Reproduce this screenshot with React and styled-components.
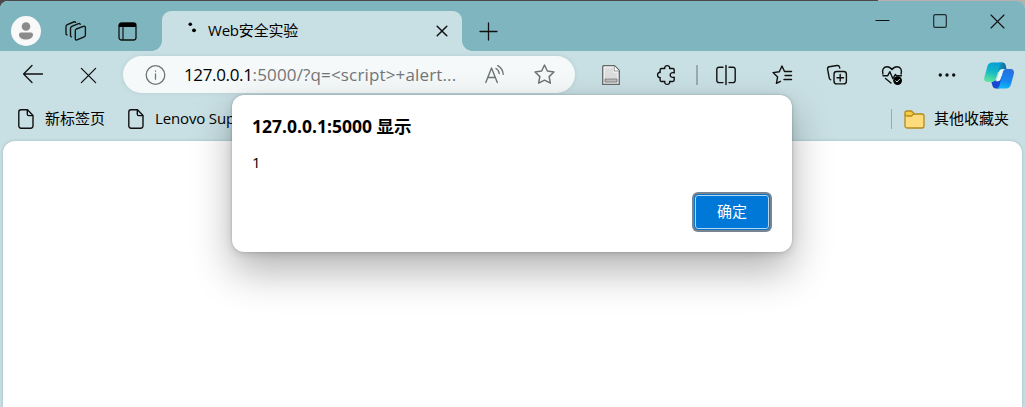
import React from 'react';
import styled, { createGlobalStyle } from 'styled-components';

const GlobalStyle = createGlobalStyle`
  * { box-sizing: border-box; }
  body {
    margin: 0;
    overflow: hidden;
    background: #393e42;
    font-family: "Open Sans", "Noto Sans CJK SC", sans-serif;
    color: #000;
  }
  svg { display: block; flex: none; overflow: visible; }
`;

const Desktop = styled.div`
  height: 407px;
  padding-top: 1px;
  background: linear-gradient(90deg, #4a494b 878px, #b8b0ae 878px);
`;

const Window = styled.div`
  position: relative;
  width: 1025px;
  height: 406px;
  display: flex;
  flex-direction: column;
  overflow: hidden;
  background: #c8dfe3;
  border-radius: 8px 8px 0 0;
`;

const TitleBar = styled.header`
  display: flex;
  height: 50px;
  background: #7eb5be;
`;

const Slot = styled.div`
  width: ${(p) => p.$w}px;
  height: ${(p) => p.$h || 46}px;
  margin-top: ${(p) => p.$top || 0}px;
  flex: none;
  display: flex;
  align-items: center;
  justify-content: center;
`;

const Avatar = styled.div`
  width: 30px;
  height: 30px;
  border-radius: 50%;
  background: #f9f9f9;
  display: flex;
  align-items: center;
  justify-content: center;
`;

const Tab = styled.div`
  position: relative;
  display: flex;
  align-items: center;
  width: 300px;
  height: 40px;
  margin: 10px 0 0 7px;
  padding: 0 14px 0 24px;
  border-radius: 9px 9px 0 0;
  background: #c8dfe3;
  &::before, &::after {
    content: "";
    position: absolute;
    bottom: 0;
    width: 10px;
    height: 10px;
  }
  &::before {
    left: -10px;
    background: radial-gradient(circle at 0 0, transparent 9.5px, #c8dfe3 10px);
  }
  &::after {
    right: -10px;
    background: radial-gradient(circle at 100% 0, transparent 9.5px, #c8dfe3 10px);
  }
`;

const TabTitle = styled.span`
  flex: 1;
  margin-left: 6px;
  padding-bottom: 2px;
  font-size: 15px;
  line-height: 20px;
  letter-spacing: -0.2px;
`;

const WindowButtons = styled.div`
  display: flex;
  margin-left: auto;
`;

const Toolbar = styled.nav`
  display: flex;
  height: 46px;
  padding-left: 5px;
`;

const AddressBar = styled.div`
  display: flex;
  align-items: center;
  width: 452px;
  height: 37px;
  margin: 5px 8px 0 7px;
  padding: 0 20px 0 22px;
  border-radius: 19px;
  background: #f5f9fa;
  box-shadow: 0 0 4px rgba(90, 140, 150, 0.18);
`;

const Url = styled.span`
  flex: 1;
  margin-left: 19px;
  font-size: 17px;
  line-height: 24px;
  letter-spacing: 0.15px;
  color: #737678;
  white-space: nowrap;
`;

const Host = styled.span`
  letter-spacing: -0.35px;
  color: #000;
`;

const AddressActions = styled.div`
  display: flex;
  align-items: center;
  gap: 29px;
`;

const Divider = styled.div`
  width: ${(p) => p.$w || 1}px;
  height: 20px;
  background: #97abb0;
`;

const BookmarksBar = styled.div`
  display: flex;
  align-items: center;
  height: 44px;
  padding: 0 16px 0 18px;
`;

const Bookmark = styled.div`
  display: flex;
  align-items: center;
  gap: ${(p) => p.$gap || 11}px;
  margin-right: ${(p) => p.$after || 0}px;
  font-size: 15px;
  line-height: 20px;
  letter-spacing: ${(p) => p.$track || 0}px;
  white-space: nowrap;
`;

const BookmarkLabel = styled.span`
  padding-bottom: 2px;
`;

const OtherBookmarks = styled.div`
  display: flex;
  align-items: center;
  gap: 12px;
  margin-left: auto;
`;

const Page = styled.main`
  flex: 1;
  margin: 0 3px;
  border-radius: 12px 12px 0 0;
  background: #fff;
  box-shadow: 0 0 3px rgba(60, 100, 110, 0.3);
`;

const Dialog = styled.section`
  position: absolute;
  left: 232px;
  top: 94px;
  width: 560px;
  height: 157px;
  display: flex;
  flex-direction: column;
  padding: 19px 20px 20px;
  border-radius: 12px;
  background: #fff;
  box-shadow: 0 0 2px rgba(0, 0, 0, 0.25), 0 2px 8px rgba(0, 0, 0, 0.12), 0 19px 40px rgba(0, 0, 0, 0.3);
`;

const DialogTitle = styled.h1`
  margin: 0;
  font-size: 17.5px;
  line-height: 24px;
  font-weight: 700;
`;

const DialogMessage = styled.p`
  margin: 14px 0 0;
  font-size: 15px;
  line-height: 20px;
`;

const ConfirmButton = styled.button`
  align-self: flex-end;
  width: 74px;
  height: 34px;
  margin: auto 3px 3px 0;
  padding: 0 0 2px;
  border: 1px solid #b4d8f3;
  outline: 1px solid #0873c8;
  border-radius: 3px;
  background: #0078d7;
  box-shadow: 0 0 0 3px #788490;
  color: #fff;
  font: 15px/20px "Open Sans", "Noto Sans CJK SC", sans-serif;
`;

const Icon = ({ size = 20, w = 1.25, color = '#111', children }) => (
  <svg width={size} height={size} viewBox="0 0 20 20" fill="none" stroke={color}
    strokeWidth={w} strokeLinecap="round" strokeLinejoin="round">{children}</svg>
);

const PersonIcon = () => (
  <svg width="16" height="18" viewBox="0 0 16 18" fill="#8b8b8b">
    <circle cx="8" cy="4.5" r="4.3" />
    <path d="M3 10.500h10a2 2 0 0 1 2 2c0 3.300-3 5-7 5s-7-1.700-7-5a2 2 0 0 1 2-2Z" />
  </svg>
);

const WorkspacesIcon = () => (
  <svg width="22" height="21" viewBox="0 0 22 21" fill="none" stroke="#111" strokeWidth="1.35" strokeLinecap="round" strokeLinejoin="round">
    <path d="m11.300 8 7-2.700c1.300-.4 2.100.1 2.100 1.300v7.200c0 1-.4 1.700-1.300 2.100l-6.500 2.800c-1.500.6-2.300.1-2.300-1.300V9.700c0-.9.300-1.400 1-1.700Z" />
    <path d="M6.500 15.800c-.7 0-1-.5-1-1.400V7.500c0-1 .4-1.700 1.300-2.100L13.500 2.700c1-.4 1.600-.2 1.800.5M2 13.900c-.7-.2-1-.7-1-1.500V5.700c0-1 .4-1.700 1.300-2.100L8.700 1c1-.4 1.600-.2 1.900.4" />
  </svg>
);

const VerticalTabsIcon = () => (
  <svg width="19" height="19" viewBox="0 0 19 19">
    <rect x="1" y="1" width="17" height="17" rx="2.500" fill="none" stroke="#111" strokeWidth="1.3" />
    <path d="M1 5V3.500C1 2 2 1 3.500 1h12C17 1 18 2 18 3.500V5Z" fill="#000" />
    <path d="M5 5v13" stroke="#111" strokeWidth="1.2" />
  </svg>
);

const LoadingIcon = () => (
  <svg width="16" height="20" viewBox="0 0 16 20"><circle cx="4.300" cy="3.300" r="1.800" /><circle cx="8" cy="9.300" r="1.900" /></svg>
);

const PageIcon = () => (
  <svg width="16" height="20" viewBox="0 0 16 20" fill="none" stroke="#111" strokeWidth="1.400" strokeLinejoin="round">
    <path d="M3 .8h6.500l5.500 5.700V17a2.200 2.200 0 0 1-2.200 2.200H3A2.200 2.200 0 0 1 .8 17V3A2.200 2.200 0 0 1 3 .8Z" />
    <path d="M9.300 1v4.200c0 .9.500 1.400 1.400 1.400h4.200" />
  </svg>
);

const DocumentIcon = () => (
  <svg width="18" height="20" viewBox="0 0 18 20">
    <path d="M1.500.7h11L17.300 5.500v13.800H.7V1.500Z" fill="#eeeeee" stroke="#66696a" strokeWidth="1.3" />
    <path d="M3 3h8v5h4v5H3Z" fill="#dcdddd" />
    <path d="M12.300 1v5H17" fill="#fff" stroke="#9a9c9c" />
    <path d="M3 14h12v3H3Z" fill="#bfc1c1" stroke="#777" strokeWidth=".9" />
  </svg>
);

const CopilotIcon = () => (
  <svg width="30" height="27" viewBox="0 0 30 27">
    <defs>
      <linearGradient id="cpA" x1=".5" y1="0" x2=".3" y2="1"><stop stopColor="#079fd5" /><stop offset=".45" stopColor="#13b7c6" /><stop offset="1" stopColor="#61e79a" /></linearGradient>
      <linearGradient id="cpB" x1=".6" y1="0" x2=".4" y2="1"><stop stopColor="#276fe0" /><stop offset=".6" stopColor="#1687ee" /><stop offset="1" stopColor="#12b8f4" /></linearGradient>
      <linearGradient id="cpC"><stop stopColor="#0ca6c6" /><stop offset="1" stopColor="#116b9d" /></linearGradient>
    </defs>
    <path d="M15 .5h3.500c2 0 2.800 1 3.300 3l.7 3.500h-4c-2 0-3 .8-3.600 2.700L12 10Z" fill="url(#cpC)" />
    <path d="M7 18.500h8l3-5v10l-3 3h-3c-2 0-3-1-3.700-3.300Z" fill="#1947d2" />
    <path d="M8.500.5H19c-1.800.4-2.600 1.500-3.200 3.300L12.500 15c-.9 3-2 5-5.500 5H3.500C.5 20-.3 18 .4 15.300l3-11C4.200 1.700 5.800.5 8.500.5Z" fill="url(#cpA)" />
    <path d="M21.500 7H26c3.400 0 4.600 2 3.800 5l-2.900 10.500c-.8 2.900-2.200 4-4.900 4h-9.500c1.700-.5 2.600-1.600 3.100-3.300L18.500 11c.7-2.700 1.500-3.500 3-4Z" fill="url(#cpB)" />
    <path d="M17.300 7.800h2.800c-.9.800-1.300 1.600-1.700 3l-1.700 5.700c-.5 1.800-1.100 2.700-2.800 2.700h-2.200c.8-.6 1.400-1.600 1.900-3.300l1.700-5.500c.5-1.600.8-2.500 2-2.600Z" fill="#eaf8f7" />
  </svg>
);

const FolderIcon = () => (
  <svg width="21" height="19" viewBox="0 0 21 19" stroke="#b48a1a" strokeWidth="1.3" strokeLinejoin="round">
    <path d="M3 4h15a2 2 0 0 1 2 2v10a2 2 0 0 1-2 2H3a2 2 0 0 1-2-2V5Z" fill="#ffdc7b" />
    <path d="M1 5V3a2 2 0 0 1 2-2h4.500L10 3.500 7.500 6H3a2 2 0 0 1-2-2Z" fill="#f8cb42" />
  </svg>
);

const STAR = 'm10 1 2.700 5.700 6.300.9-4.600 4.400 1.200 6.300L10 15.400 4.400 18.300 5.600 12 1 7.600l6.300-.9Z';

export default function App() {
  return (
    <Desktop>
      <GlobalStyle />
      <Window>
        <TitleBar>
          <Slot $w={52} $top={7}><Avatar><PersonIcon /></Avatar></Slot>
          <Slot $w={48} $top={7}><WorkspacesIcon /></Slot>
          <Slot $w={55} $top={7}><VerticalTabsIcon /></Slot>
          <Tab>
            <LoadingIcon />
            <TabTitle>Web安全实验</TabTitle>
            <Icon size={12} w={2.5}><path d="m2 2 16 16M18 2 2 18" /></Icon>
          </Tab>
          <Slot $w={53} $top={7}><Icon size={17} w={1.500}><path d="M10 0v20M0 10h20" /></Icon></Slot>
          <WindowButtons>
            <Slot $w={57} $h={39}><Icon size={13} w={1.700}><path d="M0 10h20" /></Icon></Slot>
            <Slot $w={58} $h={40}><Icon size={14} w={1.700} color="#1f2d30"><rect x="1" y="1" width="18" height="18" rx="2" /></Icon></Slot>
            <Slot $w={56} $h={40}><Icon size={13} w={1.700}><path d="m0 0 20 20M20 0 0 20" /></Icon></Slot>
          </WindowButtons>
        </TitleBar>

        <Toolbar>
          <Slot $w={55}><Icon w={1.3}><path d="M19.500 10H.8M9 1.500.6 10 9 18.500" /></Icon></Slot>
          <Slot $w={56} $top={1}><Icon size={15} w={1.700}><path d="m.5.5 19 19M19.500.5.500 19.500" /></Icon></Slot>
          <AddressBar>
            <Icon color="#6e7375" w={1.3}><circle cx="10.500" cy="10" r="9.300" /><path d="M10.500 8.800v5.400M10.500 6v.2" /></Icon>
            <Url><Host>127.0.0.1</Host>:5000/?q=&lt;script&gt;+alert...</Url>
            <AddressActions>
              <Icon color="#6e7375" w={1.4}><path d="M.8 17.500 6.500 3l5.800 14.500M2.700 12.500h7.700M11 3.500c2 1.100 3 2.900 3.200 5M12.700.7c3.300 1.900 5.300 4.800 5.500 8.600" /></Icon>
              <Icon color="#6e7375" w={1.4} size={21}><path d={STAR} /></Icon>
            </AddressActions>
          </AddressBar>
          <Slot $w={56} $top={1}><DocumentIcon /></Slot>
          <Slot $w={56} $top={1}><Icon w={1.4}><path d="M4.500 3.500h3.300C7.300 1.700 8.600.6 10.200.6s2.900 1.100 2.400 2.900h3.200c.8 0 1.400.6 1.400 1.400v3c-2.500-.7-4 .3-4 2.100s1.500 2.800 4 2.100v3c0 .8-.6 1.400-1.400 1.400h-3.200c.5 1.800-.8 2.900-2.400 2.900s-2.900-1.100-2.400-2.900H4.500c-.8 0-1.400-.6-1.400-1.400v-2.700C1.500 12.900.6 11.600.6 10s.9-2.900 2.500-2.400V4.900c0-.8.600-1.400 1.400-1.400Z" /></Icon></Slot>
          <Slot $w={4} $top={1}><Divider $w={2} /></Slot>
          <Slot $w={54} $top={1}><Icon w={1.400}><path d="M7 2.200H3A2.200 2.200 0 0 0 .8 4.400v11A2.200 2.200 0 0 0 3 17.600h4M13 2.200h4a2.200 2.200 0 0 1 2.200 2.200v11a2.200 2.200 0 0 1-2.200 2.200h-4M10 .5v19" /></Icon></Slot>
          <Slot $w={57} $top={1}><Icon w={1.400}><path d="M12.500 6.500 10 1 7.300 6.700 1 7.600l4.600 4.400-1.200 6.300 4-2M12.500 6.500h7M13 10.500h6.500M12 14.500h7.500" /></Icon></Slot>
          <Slot $w={54} $top={1}><Icon w={1.400}><rect x="7" y="6.500" width="12.400" height="12.400" rx="2.700" /><path d="M13.200 9.500V16M10 12.700h6.500M3.700 14.800c-.8-.3-1.300-1-1.500-2L.6 4.200C.4 2.800 1 1.900 2.300 1.700L10 .5c1.300-.2 2.200.3 2.500 1.500l.3 1" /></Icon></Slot>
          <Slot $w={56} $top={1}><Icon w={1.400}><path d="M.9 9C-.4 4.500 2 1.700 5 1.700c2.200 0 3.700 1 5 2.900 1.300-1.900 2.800-2.900 5-2.900 3 0 5.400 2.800 4.100 7.300M1 10.700h4.700l2.200-4 3 7 2.500-4.300 1 1.300h5M3.500 13.500 9 18" /><circle cx="15.600" cy="15.600" r="4.400" fill="#000" stroke="none" /><path d="m13.800 15.800 1.200 1.200 2.500-2.700" stroke="#c8dfe3" strokeWidth="1" /></Icon></Slot>
          <Slot $w={54} $top={1}><Icon><g fill="#111" stroke="none"><circle cx="3.300" cy="10" r="1.700" /><circle cx="10" cy="10" r="1.700" /><circle cx="16.700" cy="10" r="1.700" /></g></Icon></Slot>
          <Slot $w={49} $top={1}><CopilotIcon /></Slot>
        </Toolbar>

        <BookmarksBar>
          <Bookmark $after={23}><PageIcon /><BookmarkLabel>新标签页</BookmarkLabel></Bookmark>
          <Bookmark $track={-0.15}><PageIcon /><BookmarkLabel>Lenovo Support</BookmarkLabel></Bookmark>
          <OtherBookmarks>
            <Divider />
            <Bookmark $gap={9}><FolderIcon /><BookmarkLabel>其他收藏夹</BookmarkLabel></Bookmark>
          </OtherBookmarks>
        </BookmarksBar>

        <Page />

        <Dialog role="alertdialog">
          <DialogTitle>127.0.0.1:5000 显示</DialogTitle>
          <DialogMessage>1</DialogMessage>
          <ConfirmButton>确定</ConfirmButton>
        </Dialog>
      </Window>
    </Desktop>
  );
}
